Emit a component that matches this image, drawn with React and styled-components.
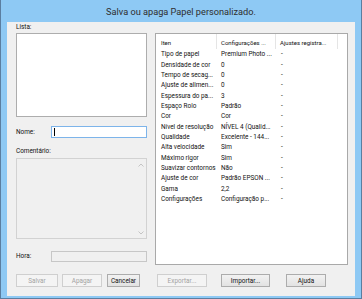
import React from 'react'
import styled, { createGlobalStyle } from 'styled-components'

const Global = createGlobalStyle`
	html, body {
		margin: 0;
		padding: 0;
		background: #8ec9f4;
	}
	body {
		font-family: Roboto, "Open Sans", sans-serif;
		color: #111;
	}
`

const Frame = styled.div`
	width: 362px;
	height: 299px;
	box-sizing: border-box;
	background: #8ec9f4;
	border: 1px solid #5b7ea0;
	border-top: none;
	display: flex;
	flex-direction: column;
`

const TitleBar = styled.div`
	height: 22px;
	display: flex;
	align-items: center;
	justify-content: center;
	font-size: 9.2px;
	color: #2e2e2e;
	padding-top: 1px;
	box-sizing: border-box;
`

const Body = styled.div`
	flex: 1;
	margin: 0 6px 2px 6px;
	background: #f0f0f0;
	display: grid;
	grid-template-columns: 131px 193px;
	column-gap: 8px;
	padding: 0 7px 9px 9px;
`

const Column = styled.div`
	display: flex;
	flex-direction: column;
`

const Label = styled.div`
	font-size: 6.4px;
	height: ${(p) => p.h || 11}px;
	line-height: ${(p) => p.h || 11}px;
	margin-top: ${(p) => p.mt || 0}px;
	width: ${(p) => (p.w ? p.w + 'px' : 'auto')};
	flex-shrink: 0;
	white-space: nowrap;
`

const ListBox = styled.div`
	height: 84px;
	box-sizing: border-box;
	background: #fff;
	border: 1px solid #adadad;
`

const FieldRow = styled.div`
	display: flex;
	align-items: center;
	margin-top: ${(p) => p.mt}px;
	height: ${(p) => p.h}px;
`

const Input = styled.div`
	flex: 1;
	height: 100%;
	box-sizing: border-box;
	background: ${(p) => (p.disabled ? '#f0f0f0' : '#fff')};
	border: 1px solid ${(p) => (p.focused ? '#7db4ea' : '#c7c7c7')};
	display: flex;
	align-items: center;
	padding-left: 2px;
`

const Caret = styled.span`
	width: 1px;
	height: 8px;
	background: #000;
`

const CommentBox = styled.div`
	height: 81px;
	box-sizing: border-box;
	background: #f0f0f0;
	border: 1px solid #d2d2d2;
	display: flex;
	justify-content: flex-end;
`

const ScrollTrack = styled.div`
	width: 11px;
	display: flex;
	flex-direction: column;
	justify-content: space-between;
	align-items: center;
	padding: 4px 0 3px;
`

const ButtonRow = styled.div`
	display: flex;
	margin-top: ${(p) => p.mt}px;
	height: 13px;
`

const Button = styled.div`
	width: ${(p) => p.w}px;
	margin-left: ${(p) => p.ml || 0}px;
	box-sizing: border-box;
	display: flex;
	align-items: center;
	justify-content: center;
	font-size: 6.4px;
	border: 1px solid ${(p) => (p.disabled ? '#cfcfcf' : '#acacac')};
	background: ${(p) =>
		p.disabled ? '#f4f4f4' : 'linear-gradient(#f2f2f2, #e2e2e2)'};
	color: ${(p) => (p.disabled ? '#a3a3a3' : '#111')};
	white-space: nowrap;
`

const Panel = styled.div`
	margin-top: 11px;
	height: 232px;
	box-sizing: border-box;
	background: #fff;
	border: 1px solid #a9a9a9;
	font-size: 6.4px;
`

const Grid = styled.div`
	display: grid;
	grid-template-columns: 61px 59px 62px;
	grid-auto-rows: 10.36px;
`

const HeaderRow = styled.div`
	display: grid;
	grid-template-columns: 61px 59px 62px;
`

const HeaderCell = styled.div`
	height: 15px;
	box-sizing: border-box;
	border-right: 1px solid #e5e5e5;
	padding: 2px 0 0 ${(p) => p.pl}px;
	display: flex;
	align-items: center;
	white-space: nowrap;
	font-size: 6px;
`

const Cell = styled.div`
	padding-left: ${(p) => p.pl}px;
	display: flex;
	align-items: center;
	white-space: nowrap;
`

const Chevron = ({ up }) => (
	<svg width="6" height="4" viewBox="0 0 6 4">
		<path
			d={up ? 'M0.5 3.5 L3 1 L5.5 3.5' : 'M0.5 0.5 L3 3 L5.5 0.5'}
			fill="none"
			stroke="#c4c4c4"
			strokeWidth="1"
		/>
	</svg>
)

const rows = [
	['Tipo de papel', 'Premium Photo ...'],
	['Densidade de cor', '0'],
	['Tempo de secag...', '0'],
	['Ajuste de alimen...', '0'],
	['Espessura do pa...', '3'],
	['Espaço Rolo', 'Padrão'],
	['Cor', 'Cor'],
	['Nível de resolução', 'NÍVEL 4 (Qualid...'],
	['Qualidade', 'Excelente - 144...'],
	['Alta velocidade', 'Sim'],
	['Máximo rigor', 'Sim'],
	['Suavizar contornos', 'Não'],
	['Ajuste de cor', 'Padrão EPSON ...'],
	['Gama', '2,2'],
	['Configurações', 'Configuração p...'],
]

const App = () => {
	return (
		<Frame>
			<Global />
			<TitleBar>Salva ou apaga Papel personalizado.</TitleBar>
			<Body>
				<Column>
					<Label>Lista:</Label>
					<ListBox />
					<FieldRow mt={9} h={12}>
						<Label w={35}>Nome:</Label>
						<Input focused>
							<Caret />
						</Input>
					</FieldRow>
					<Label mt={7} h={13}>
						Comentário:
					</Label>
					<CommentBox>
						<ScrollTrack>
							<Chevron up />
							<Chevron />
						</ScrollTrack>
					</CommentBox>
					<FieldRow mt={12} h={11}>
						<Label w={35}>Hora:</Label>
						<Input disabled />
					</FieldRow>
					<ButtonRow mt={12}>
						<Button w={42} disabled>
							Salvar
						</Button>
						<Button w={40} ml={4} disabled>
							Apagar
						</Button>
						<Button w={33} ml={5}>
							Cancelar
						</Button>
					</ButtonRow>
				</Column>
				<Column>
					<Panel>
						<HeaderRow>
							<HeaderCell pl={5}>Iten</HeaderCell>
							<HeaderCell pl={4}>Configurações ...</HeaderCell>
							<HeaderCell pl={4}>Ajustes registra...</HeaderCell>
						</HeaderRow>
						<Grid>
							{rows.map(([item, value]) => (
								<React.Fragment key={item}>
									<Cell pl={5}>{item}</Cell>
									<Cell pl={4}>{value}</Cell>
									<Cell pl={5}>-</Cell>
								</React.Fragment>
							))}
						</Grid>
					</Panel>
					<ButtonRow mt={9}>
						<Button w={50} ml={2} disabled>
							Exportar...
						</Button>
						<Button w={49} ml={14}>
							Importar...
						</Button>
						<Button w={40} ml={16}>
							Ajuda
						</Button>
					</ButtonRow>
				</Column>
			</Body>
		</Frame>
	)
}

export default App
